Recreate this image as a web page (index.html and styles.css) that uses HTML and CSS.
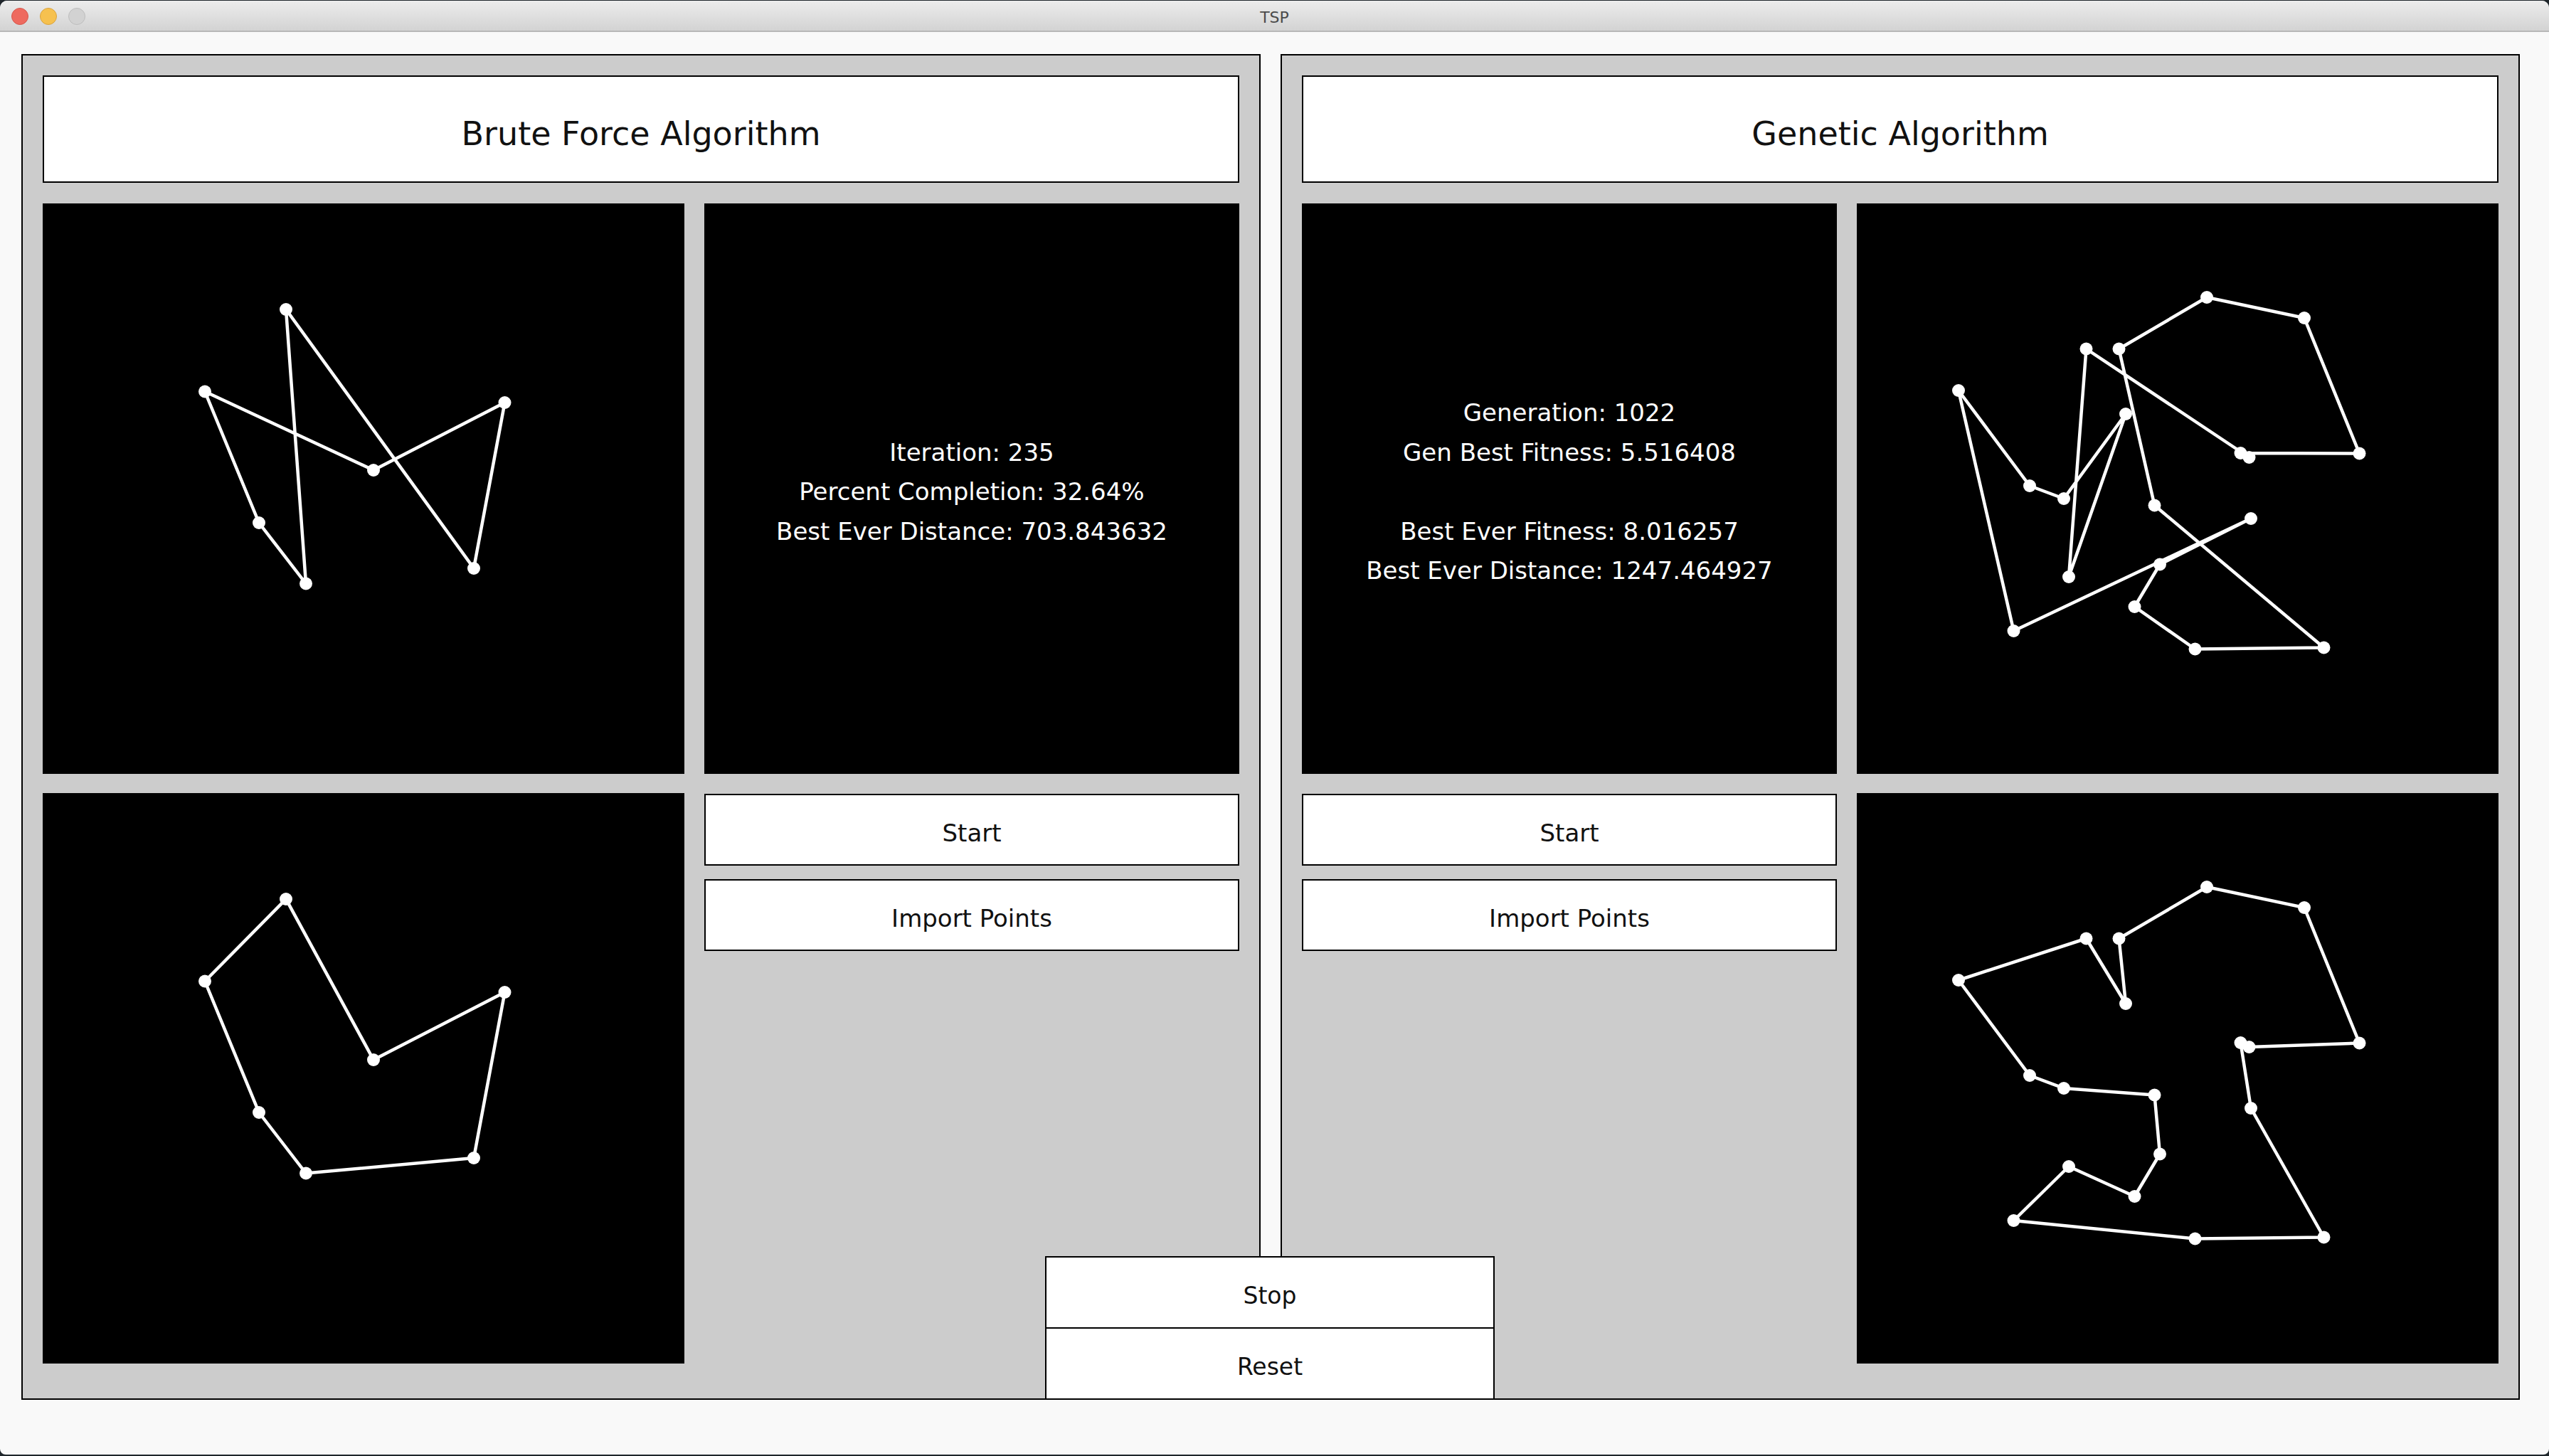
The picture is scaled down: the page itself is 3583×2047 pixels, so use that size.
FILE: index.html
```html
<!DOCTYPE html>
<html>
<head>
<meta charset="utf-8">
<title>TSP</title>
<link rel="stylesheet" href="styles.css">
</head>
<body>
<div class="window">
  <div class="titlebar">
    <div class="lights">
      <span class="light red"></span>
      <span class="light yellow"></span>
      <span class="light gray"></span>
    </div>
    <div class="title">TSP</div>
    <div></div>
  </div>
  <div class="content">
    <section class="panel panel-bf">
      <div class="header">Brute Force Algorithm</div>
      <div class="grid">
        <div class="canvas">
          <svg viewBox="0 0 902 802">
            <polygon class="route" points="342,149 370,534.5 304,449 228,264.5 465,375 649.5,280 606,513"/>
            <g class="dots">
              <circle cx="342" cy="149" r="9"/><circle cx="228" cy="264.5" r="9"/><circle cx="304" cy="449" r="9"/><circle cx="370" cy="534.5" r="9"/><circle cx="465" cy="375" r="9"/><circle cx="649.5" cy="280" r="9"/><circle cx="606" cy="513" r="9"/>
            </g>
          </svg>
        </div>
        <div class="canvas info">
          <div>Iteration: 235</div>
          <div>Percent Completion: 32.64%</div>
          <div>Best Ever Distance: 703.843632</div>
        </div>
        <div class="canvas">
          <svg viewBox="0 0 902 802">
            <polygon class="route" points="342,149 228,264.5 304,449 370,534.5 606,513 649.5,280 465,375"/>
            <g class="dots">
              <circle cx="342" cy="149" r="9"/><circle cx="228" cy="264.5" r="9"/><circle cx="304" cy="449" r="9"/><circle cx="370" cy="534.5" r="9"/><circle cx="465" cy="375" r="9"/><circle cx="649.5" cy="280" r="9"/><circle cx="606" cy="513" r="9"/>
            </g>
          </svg>
        </div>
        <div class="controls">
          <button class="btn">Start</button>
          <button class="btn">Import Points</button>
        </div>
      </div>
    </section>
    <section class="panel panel-ga">
      <div class="header">Genetic Algorithm</div>
      <div class="grid">
        <div class="canvas info">
          <div>Generation: 1022</div>
          <div>Gen Best Fitness: 5.516408</div>
          <div class="blank"></div>
          <div>Best Ever Fitness: 8.016257</div>
          <div>Best Ever Distance: 1247.464927</div>
        </div>
        <div class="canvas">
          <svg viewBox="0 0 902 802">
            <polygon class="route" points="368.5,204.5 492,132 629,161 706.5,351.5 539.5,351 551.5,357 322.5,204.5 298,525 378,296 291,415 243,397 143,263 220.5,601 554,443 426,507.5 390.5,567 475.5,626.5 656.5,624.5 418.5,424.5"/>
            <g class="dots">
              <circle cx="492" cy="132" r="9"/><circle cx="629" cy="161" r="9"/><circle cx="706.5" cy="351.5" r="9"/><circle cx="539.5" cy="351" r="9"/><circle cx="551.5" cy="357" r="9"/><circle cx="322.5" cy="204.5" r="9"/><circle cx="368.5" cy="204.5" r="9"/><circle cx="143" cy="263" r="9"/><circle cx="378" cy="296" r="9"/><circle cx="243" cy="397" r="9"/><circle cx="291" cy="415" r="9"/><circle cx="418.5" cy="424.5" r="9"/><circle cx="554" cy="443" r="9"/><circle cx="298" cy="525" r="9"/><circle cx="426" cy="507.5" r="9"/><circle cx="390.5" cy="567" r="9"/><circle cx="220.5" cy="601" r="9"/><circle cx="475.5" cy="626.5" r="9"/><circle cx="656.5" cy="624.5" r="9"/>
            </g>
          </svg>
        </div>
        <div class="controls">
          <button class="btn">Start</button>
          <button class="btn">Import Points</button>
        </div>
        <div class="canvas">
          <svg viewBox="0 0 902 802">
            <polygon class="route" points="143,263 322.5,204.5 378,296 368.5,204.5 492,132 629,161 706.5,351.5 551.5,357 539.5,351 554,443 656.5,624.5 475.5,626.5 220.5,601 298,525 390.5,567 426,507.5 418.5,424.5 291,415 243,397"/>
            <g class="dots">
              <circle cx="492" cy="132" r="9"/><circle cx="629" cy="161" r="9"/><circle cx="706.5" cy="351.5" r="9"/><circle cx="539.5" cy="351" r="9"/><circle cx="551.5" cy="357" r="9"/><circle cx="322.5" cy="204.5" r="9"/><circle cx="368.5" cy="204.5" r="9"/><circle cx="143" cy="263" r="9"/><circle cx="378" cy="296" r="9"/><circle cx="243" cy="397" r="9"/><circle cx="291" cy="415" r="9"/><circle cx="418.5" cy="424.5" r="9"/><circle cx="554" cy="443" r="9"/><circle cx="298" cy="525" r="9"/><circle cx="426" cy="507.5" r="9"/><circle cx="390.5" cy="567" r="9"/><circle cx="220.5" cy="601" r="9"/><circle cx="475.5" cy="626.5" r="9"/><circle cx="656.5" cy="624.5" r="9"/>
            </g>
          </svg>
        </div>
      </div>
    </section>
  </div>
  <div class="global-controls">
    <button class="gbtn">Stop</button>
    <button class="gbtn reset">Reset</button>
  </div>
</div>
</body>
</html>
```

FILE: styles.css
```css
html, body {
  margin: 0;
  padding: 0;
}

body {
  background: #1f262b;
  font-family: "DejaVu Sans", "Noto Sans", sans-serif;
  width: 3583px;
  height: 2047px;
  overflow: hidden;
}

.window {
  margin-top: 1px;
  height: 2044px;
  background: #f9f9f9;
  border-radius: 10px 10px 8px 8px;
  overflow: hidden;
  position: relative;
}

.titlebar {
  height: 42px;
  border-bottom: 2px solid #b8b8b8;
  background: linear-gradient(#ececec, #d3d3d3);
  display: grid;
  grid-template-columns: 1fr auto 1fr;
  align-items: center;
}

.lights {
  display: flex;
  gap: 16px;
  padding-left: 16px;
  padding-top: 2px;
}

.light {
  box-sizing: border-box;
  width: 24px;
  height: 24px;
  border-radius: 50%;
  border: 1px solid;
}

.light.red {
  background: #ee6a5f;
  border-color: #d5584d;
}

.light.yellow {
  background: #f6c14f;
  border-color: #d9a33e;
}

.light.gray {
  background: #d2d2d2;
  border-color: #bdbdbd;
}

.title {
  font-size: 22px;
  color: #4b4b4b;
  padding-top: 4px;
}

.content {
  display: flex;
  gap: 28px;
  padding: 31px 0 0 30px;
}

.panel {
  box-sizing: border-box;
  width: 1742px;
  height: 1892px;
  border: 2px solid #000;
  background: #cccccc;
  padding: 28px 28px 0;
  flex: none;
}

.header {
  box-sizing: border-box;
  height: 151px;
  border: 2px solid #000;
  background: #fff;
  display: flex;
  align-items: center;
  justify-content: center;
  font-size: 46px;
  color: #111;
  margin-bottom: 29px;
  padding-top: 13px;
}

.grid {
  display: grid;
  grid-template-columns: 902px 752px;
  grid-template-rows: 802px 802px;
  column-gap: 28px;
  row-gap: 27px;
}

.panel-ga .grid {
  grid-template-columns: 752px 902px;
}

.canvas {
  background: #000;
}

.canvas svg {
  display: block;
  width: 902px;
  height: 802px;
}

.route {
  fill: none;
  stroke: #fff;
  stroke-width: 4.5;
  stroke-linejoin: round;
}

.dots circle {
  fill: #fff;
}

.info {
  box-sizing: border-box;
  display: flex;
  flex-direction: column;
  justify-content: center;
  align-items: center;
  color: #fff;
  font-size: 34px;
  line-height: 55.6px;
  padding-top: 10px;
  white-space: pre;
}

.info .blank {
  height: 55.6px;
}

.controls {
  display: flex;
  flex-direction: column;
  gap: 19px;
  padding-top: 1px;
}

.btn {
  box-sizing: border-box;
  height: 101px;
  margin: 0;
  padding: 9px 0 0;
  border: 2px solid #000;
  background: #fff;
  font-family: "DejaVu Sans", "Noto Sans", sans-serif;
  font-size: 34px;
  color: #111;
}

.global-controls {
  position: absolute;
  left: 1469px;
  top: 1765px;
  width: 632px;
  box-sizing: border-box;
  border: 2px solid #000;
  background: #fff;
  display: flex;
  flex-direction: column;
}

.gbtn {
  box-sizing: border-box;
  height: 98px;
  margin: 0;
  padding: 8px 0 0;
  border: 0;
  background: #fff;
  font-family: "DejaVu Sans", "Noto Sans", sans-serif;
  font-size: 33px;
  color: #111;
}

.gbtn.reset {
  height: 100px;
  border-top: 2px solid #000;
}
```
